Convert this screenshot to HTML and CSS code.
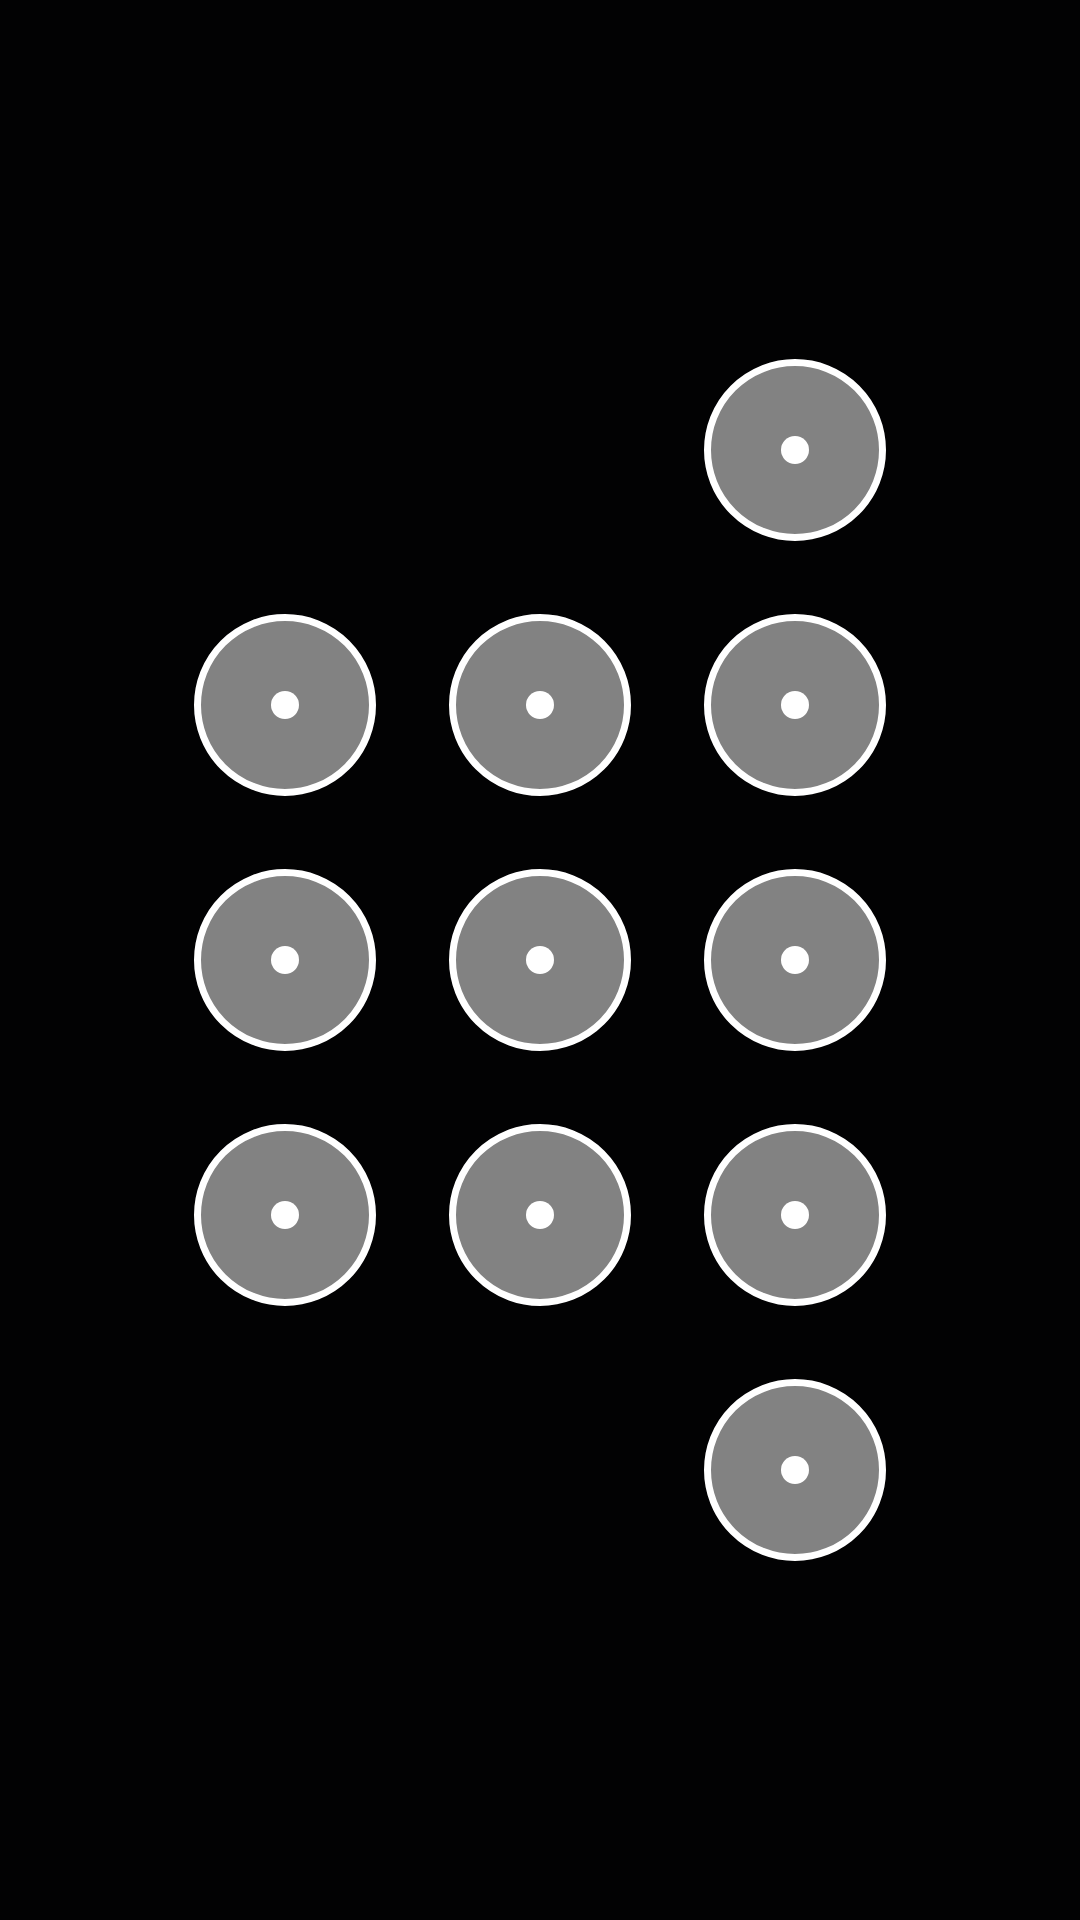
FILE: index.html
```html
<!DOCTYPE html>
<html lang="en">

<head>
    <meta charset="UTF-8">
    <meta name="viewport" content="width=device-width, initial-scale=1.0">
    <title>Pattern Unlock</title>
    <link rel="stylesheet" href="styles.css">
</head>

<body>
    <div class="pattern">
        <div class="cell empty"></div>
        <div class="cell empty"></div>
        <div class="cell"><span class="dot"></span></div>

        <div class="cell"><span class="dot"></span></div>
        <div class="cell"><span class="dot"></span></div>
        <div class="cell"><span class="dot"></span></div>

        <div class="cell"><span class="dot"></span></div>
        <div class="cell"><span class="dot"></span></div>
        <div class="cell"><span class="dot"></span></div>

        <div class="cell"><span class="dot"></span></div>
        <div class="cell"><span class="dot"></span></div>
        <div class="cell"><span class="dot"></span></div>

        <div class="cell empty"></div>
        <div class="cell empty"></div>
        <div class="cell"><span class="dot"></span></div>
    </div>
</body>

</html>
```

FILE: styles.css
```css
body {
    margin: 0;
    width: 1080px;
    height: 1920px;
    background: #020203;
    display: flex;
    align-items: center;
    justify-content: center;
    overflow: hidden;
}

.pattern {
    display: grid;
    grid-template-columns: repeat(3, 182px);
    grid-template-rows: repeat(5, 182px);
    gap: 73px;
}

.cell {
    box-sizing: border-box;
    width: 182px;
    height: 182px;
    border-radius: 50%;
    border: 7px solid #fff;
    background-color: #828282;
    display: flex;
    align-items: center;
    justify-content: center;
}

.cell.empty {
    visibility: hidden;
}

.dot {
    width: 28px;
    height: 28px;
    border-radius: 50%;
    background-color: #fff;
}
```
